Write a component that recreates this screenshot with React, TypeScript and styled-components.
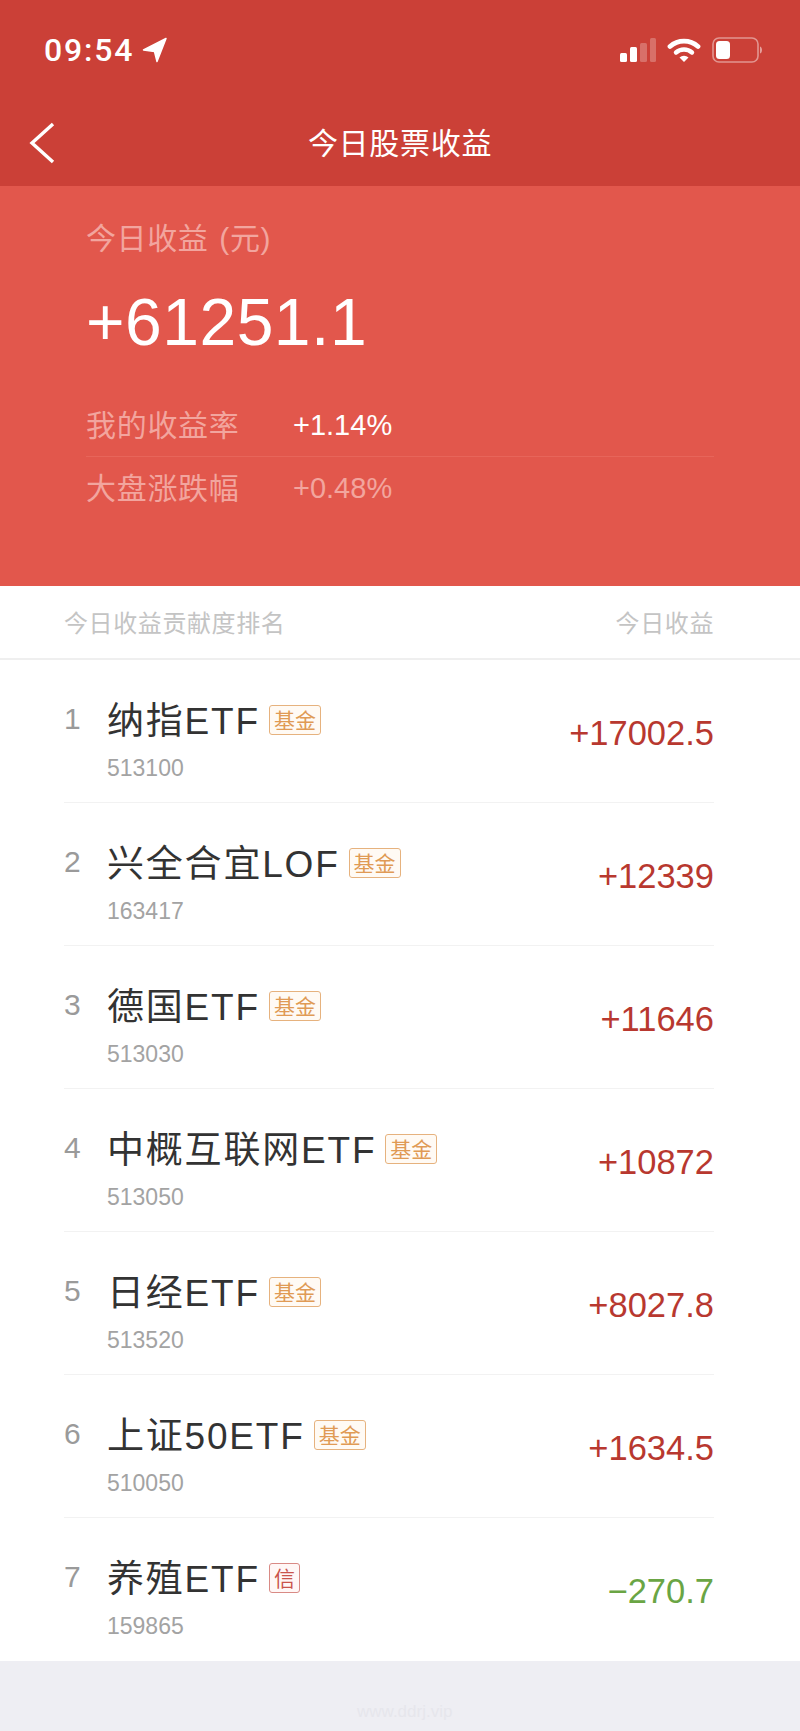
import styled, { createGlobalStyle } from "styled-components";

const GlobalStyle = createGlobalStyle`
  * {
    box-sizing: border-box;
  }
  body {
    margin: 0;
    background: #eeeef3;
    font-family: "Liberation Sans", "Noto Sans CJK SC", sans-serif;
  }
`;

const stocks = [
  { name: "纳指ETF", code: "513100", tag: "基金", value: "+17002.5" },
  { name: "兴全合宜LOF", code: "163417", tag: "基金", value: "+12339" },
  { name: "德国ETF", code: "513030", tag: "基金", value: "+11646" },
  { name: "中概互联网ETF", code: "513050", tag: "基金", value: "+10872" },
  { name: "日经ETF", code: "513520", tag: "基金", value: "+8027.8" },
  { name: "上证50ETF", code: "510050", tag: "基金", value: "+1634.5" },
  { name: "养殖ETF", code: "159865", tag: "信", value: "−270.7", loss: true },
];

const App = () => {
  return (
    <Page>
      <GlobalStyle />
      <TopBar>
        <StatusBar>
          <Clock>
            09:54
            <svg width="26" height="26" viewBox="0 0 26 26">
              <path d="M24 1.5 L1.5 13 L12.5 14.5 L15 24.5 Z" fill="#fff" stroke="#fff" strokeWidth="1.5" strokeLinejoin="round" />
            </svg>
          </Clock>
          <StatusIcons>
            <svg width="36" height="24" viewBox="0 0 36 24">
              <rect x="0" y="15" width="7" height="9" rx="1.5" fill="#fff" />
              <rect x="10" y="9" width="7" height="15" rx="1.5" fill="#fff" />
              <rect x="20" y="5" width="7" height="19" rx="1.5" fill="#fff" fillOpacity="0.25" />
              <rect x="30" y="0" width="6" height="24" rx="1.5" fill="#fff" fillOpacity="0.25" />
            </svg>
            <svg width="34" height="24" viewBox="0 0 34 24">
              <path d="M3 8.5 A21 21 0 0 1 31 8.5" fill="none" stroke="#fff" strokeWidth="4.8" strokeLinecap="round" />
              <path d="M9 14.5 A12 12 0 0 1 25 14.5" fill="none" stroke="#fff" strokeWidth="4.4" strokeLinecap="round" />
              <path d="M17 24 L12.5 19.5 A6.5 6.5 0 0 1 21.5 19.5 Z" fill="#fff" />
            </svg>
            <svg width="50" height="26" viewBox="0 0 50 26">
              <rect x="1" y="1" width="45" height="24" rx="6" fill="none" stroke="#fff" strokeOpacity="0.45" strokeWidth="1.6" />
              <rect x="4" y="4" width="14" height="18" rx="3.5" fill="#fff" />
              <path d="M48 9.5 C49.5 10 50 11.5 50 13 C50 14.5 49.5 16 48 16.5 Z" fill="#fff" fillOpacity="0.5" />
            </svg>
          </StatusIcons>
        </StatusBar>
        <NavBar>
          <BackIcon width="26" height="42" viewBox="0 0 26 42">
            <path d="M24 2 L3 21 L24 40" fill="none" stroke="#fff" strokeWidth="3.4" />
          </BackIcon>
          今日股票收益
        </NavBar>
      </TopBar>

      <Hero>
        <HeroLabel>今日收益 (元)</HeroLabel>
        <HeroAmount>+61251.1</HeroAmount>
        <StatList>
          <StatRow>
            <StatName>我的收益率</StatName>
            <StatValue>+1.14%</StatValue>
          </StatRow>
          <StatRow $muted>
            <StatName>大盘涨跌幅</StatName>
            <StatValue $muted>+0.48%</StatValue>
          </StatRow>
        </StatList>
      </Hero>

      <ListCard>
        <ListHead>
          <span>今日收益贡献度排名</span>
          <span>今日收益</span>
        </ListHead>
        {stocks.map((stock, i) => (
          <StockRow key={stock.code}>
            <Rank>{i + 1}</Rank>
            <StockInfo>
              <NameLine>
                <StockName>{stock.name}</StockName>
                <Tag $credit={stock.loss}>{stock.tag}</Tag>
              </NameLine>
              <StockCode>{stock.code}</StockCode>
            </StockInfo>
            <Profit $loss={stock.loss}>{stock.value}</Profit>
          </StockRow>
        ))}
      </ListCard>

      <Footer>www.ddrj.vip</Footer>
    </Page>
  );
};

export default App;

const Page = styled.div`
  width: 800px;
  min-height: 1731px;
  background: #eeeef3;
`;

const TopBar = styled.header`
  background: #cb4037;
  color: #fff;
`;

const StatusBar = styled.div`
  height: 100px;
  padding: 37px 38px 0 44px;
  display: flex;
  justify-content: space-between;
  align-items: flex-start;
`;

const Clock = styled.div`
  display: flex;
  align-items: center;
  gap: 8px;
  height: 26px;
  font-family: Roboto, sans-serif;
  font-size: 32px;
  font-weight: 500;
  letter-spacing: 1.8px;
`;

const StatusIcons = styled.div`
  display: flex;
  align-items: center;
  gap: 11px;
`;

const NavBar = styled.div`
  position: relative;
  height: 86px;
  padding-bottom: 4px;
  display: flex;
  align-items: center;
  justify-content: center;
  font-size: 30px;
  letter-spacing: 0.7px;
`;

const BackIcon = styled.svg`
  position: absolute;
  left: 29px;
  top: 22px;
`;

const Hero = styled.section`
  height: 400px;
  padding: 33px 86px 0;
  background: #e2574c;
  color: #fff;
`;

const HeroLabel = styled.div`
  font-size: 30px;
  line-height: 40px;
  word-spacing: 2px;
  letter-spacing: 0.6px;
  color: #f2a59e;
`;

const HeroAmount = styled.div`
  margin-top: 23px;
  font-size: 66px;
  line-height: 80px;
  letter-spacing: 0.5px;
`;

const StatList = styled.div`
  margin-top: 32px;
`;

const StatRow = styled.div<{ $muted?: boolean }>`
  height: 63px;
  display: flex;
  align-items: center;
  border-bottom: ${(p) => (p.$muted ? "none" : "1px solid #e7655a")};
`;

const StatName = styled.span`
  width: 207px;
  padding-bottom: 5px;
  font-size: 30px;
  letter-spacing: 0.7px;
  color: #f2a59e;
`;

const StatValue = styled.span<{ $muted?: boolean }>`
  font-size: 29px;
  color: ${(p) => (p.$muted ? "#f2a59e" : "#fff")};
`;

const ListCard = styled.section`
  background: #fff;
`;

const ListHead = styled.div`
  height: 74px;
  padding: 0 86px 2px 64px;
  display: flex;
  align-items: center;
  justify-content: space-between;
  border-bottom: 2px solid #efefef;
  font-size: 24px;
  letter-spacing: 0.6px;
  color: #c4c4c4;
`;

const StockRow = styled.div`
  height: 143px;
  margin: 0 86px 0 64px;
  display: flex;
  align-items: center;
  border-bottom: 1px solid #f2f2f2;

  &:last-child {
    border-bottom: none;
  }
`;

const Rank = styled.div`
  width: 43px;
  align-self: flex-start;
  margin-top: 41px;
  font-size: 30px;
  line-height: 36px;
  color: #9a9a9a;
`;

const StockInfo = styled.div`
  flex: 1;
  align-self: flex-start;
  padding-top: 38px;
`;

const NameLine = styled.div`
  display: flex;
  align-items: center;
  gap: 9px;
  height: 44px;
`;

const StockName = styled.span`
  margin-bottom: 4px;
  font-size: 37px;
  letter-spacing: 1.8px;
  color: #333;
`;

const Tag = styled.span<{ $credit?: boolean }>`
  height: 30px;
  padding: 0 4px;
  display: flex;
  align-items: center;
  border-radius: 3px;
  border: 1px solid ${(p) => (p.$credit ? "#d98a85" : "#e6b27e")};
  background: ${(p) => (p.$credit ? "#fff7f6" : "#fffaf4")};
  color: ${(p) => (p.$credit ? "#c9544c" : "#e09a55")};
  font-size: 21px;
  line-height: 1;
`;

const StockCode = styled.div`
  margin-top: 11px;
  font-size: 23px;
  line-height: 30px;
  color: #a3a3a3;
`;

const Profit = styled.div<{ $loss?: boolean }>`
  padding-top: 4px;
  font-size: 34.5px;
  color: ${(p) => (p.$loss ? "#6aa544" : "#b8382f")};
`;

const Footer = styled.footer`
  height: 70px;
  padding-left: 357px;
  padding-top: 38px;
  font-size: 17px;
  line-height: 26px;
  color: #e6e6ec;
`;
